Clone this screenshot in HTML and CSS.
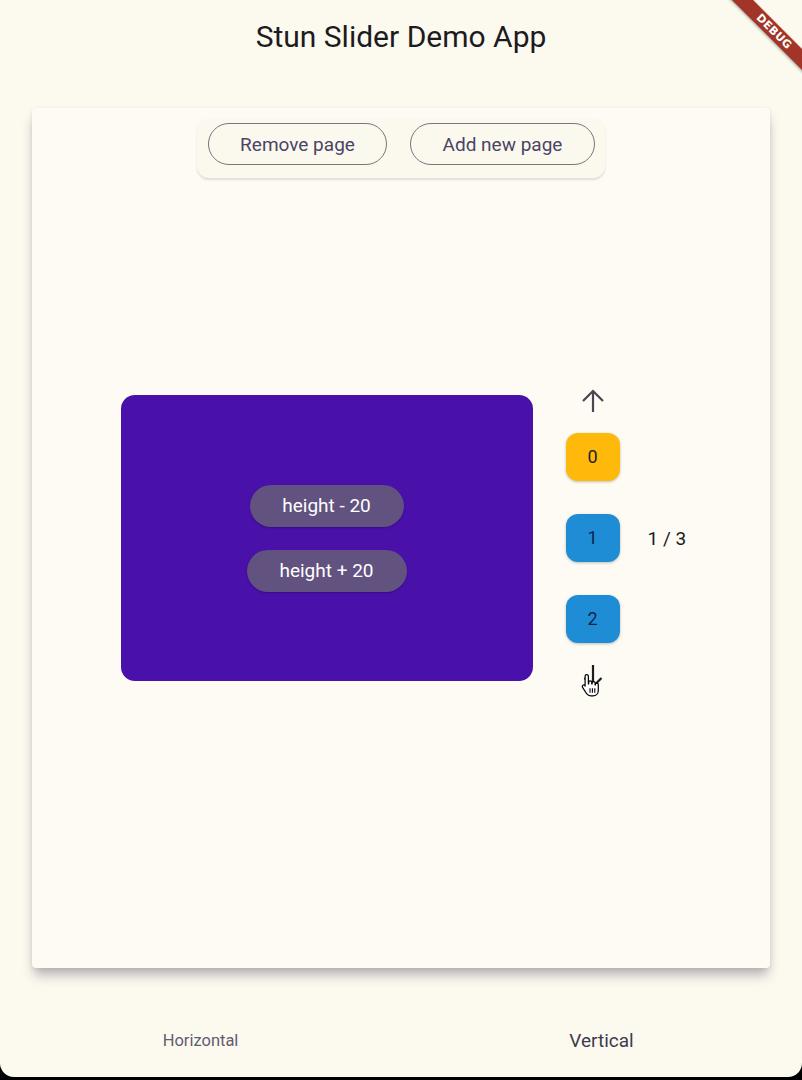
FILE: index.html
```html
<!DOCTYPE html>
<html>
<head>
<meta charset="utf-8">
<link rel="stylesheet" href="styles.css">
</head>
<body>
<div class="app">
  <header class="appbar">Stun Slider Demo App</header>
  <main class="content">
    <section class="card">
      <div class="actions">
        <button class="outlined remove">Remove page</button>
        <button class="outlined add">Add new page</button>
      </div>
      <div class="row">
        <div class="slide">
          <button class="pill minus">height - 20</button>
          <button class="pill plus">height + 20</button>
        </div>
        <div class="thumbs">
          <svg class="arrow up" viewBox="0 0 28 28" width="28" height="28"><path d="M14 25V4M4 14L14 4l10 10" fill="none" stroke="#4a4650" stroke-width="2.2"/></svg>
          <div class="thumb amber">0</div>
          <div class="thumb blue">1</div>
          <div class="thumb blue">2</div>
          <div class="downwrap">
            <svg class="arrow down" viewBox="0 0 28 28" width="28" height="28"><path d="M14 1v21M5.5 14l8.5 8.5 8.5-8.5" fill="none" stroke="#1c1b1f" stroke-width="2.2"/></svg>
            <svg class="cursor" viewBox="0 0 18 22" width="20" height="24"><path d="M6 1.5c.9 0 1.5.7 1.5 1.5v7h.3V8.6c0-.8.6-1.4 1.4-1.4s1.4.6 1.4 1.4V10h.3V9.3c0-.8.6-1.4 1.4-1.4s1.4.6 1.4 1.4V11h.3v-.4c0-.8.6-1.3 1.3-1.3s1.3.5 1.3 1.3v5.5c0 2.8-2 4.9-4.8 4.9H9.6c-1.7 0-2.8-.8-3.7-2L2.2 13.2c-.5-.7-.3-1.6.4-2 .6-.4 1.4-.2 1.8.3L4.5 12V3c0-.8.6-1.5 1.5-1.5z" fill="#fff" stroke="#000" stroke-width="1.1" stroke-linejoin="round"/><path d="M9 14v4M11.2 14v4M13.4 14v4" stroke="#000" stroke-width="1"/></svg>
          </div>
        </div>
        <div class="counter">1 / 3</div>
      </div>
    </section>
  </main>
  <nav class="bottomnav">
    <div class="tab horizontal">Horizontal</div>
    <div class="tab vertical">Vertical</div>
  </nav>
  <div class="debug"><span>DEBUG</span></div>
</div>
</body>
</html>
```
FILE: styles.css
```css
html, body {
  margin: 0;
  padding: 0;
  background: #000;
}
body {
  width: 802px;
  height: 1080px;
  overflow: hidden;
  font-family: Roboto, "Noto Sans", sans-serif;
}
.app {
  position: relative;
  width: 802px;
  height: 1077px;
  background: #fcfaef;
  border-radius: 0 0 14px 14px;
  overflow: hidden;
  display: flex;
  flex-direction: column;
}
.appbar {
  height: 72px;
  display: flex;
  align-items: center;
  justify-content: center;
  font-size: 30px;
  color: #1c1b1f;
  box-sizing: border-box;
}
.content {
  flex: 1;
  padding: 36px 32px 32px;
  display: flex;
  min-height: 0;
}
.card {
  flex: 1;
  background: #fdfbf3;
  border-radius: 4px;
  box-shadow: 0 9px 12px -2px rgba(60, 50, 80, 0.35), 0 1px 4px rgba(0, 0, 0, 0.08);
  display: grid;
  grid-template: 1fr / 1fr;
}
.actions {
  grid-area: 1 / 1;
  align-self: start;
  justify-self: center;
  margin-top: 10px;
  padding: 5px 10px 13px 11px;
  display: flex;
  gap: 23px;
  border-radius: 12px;
  background: #fbf9ee;
  box-shadow: 0 2px 2px rgba(80, 70, 90, 0.16);
}
.outlined {
  height: 42px;
  border: 1px solid #79747e;
  border-radius: 21px;
  background: transparent;
  font-family: Roboto, sans-serif;
  font-size: 19px;
  color: #4a4466;
  padding: 0;
}
.remove { width: 179px; }
.add { width: 185px; }
.row {
  grid-area: 1 / 1;
  align-self: center;
  justify-self: center;
  display: flex;
  align-items: center;
  margin-left: 6px;
}
.slide {
  width: 412px;
  height: 286px;
  background: #4a10aa;
  border-radius: 14px;
  display: flex;
  flex-direction: column;
  align-items: center;
  justify-content: center;
  gap: 23px;
}
.pill {
  height: 42px;
  border: none;
  border-radius: 21px;
  background: #62527f;
  color: #fff;
  font-family: Roboto, sans-serif;
  font-size: 19px;
  padding: 0;
  box-shadow: 0 1px 2px rgba(0, 0, 0, 0.25);
}
.minus { width: 154px; }
.plus { width: 160px; }
.thumbs {
  margin-left: 33px;
  width: 54px;
  padding-top: 2px;
  display: flex;
  flex-direction: column;
  align-items: center;
}
.arrow { display: block; }
.up { margin-bottom: 18px; }
.thumb {
  width: 54px;
  height: 48px;
  border-radius: 12px;
  display: flex;
  align-items: center;
  justify-content: center;
  font-size: 18px;
  color: #222;
  box-shadow: 0 1px 3px rgba(0, 0, 0, 0.25);
}
.thumb + .thumb { margin-top: 33px; }
.amber { background: #ffb90a; }
.blue { background: #1f8cd6; color: #10244a; }
.downwrap {
  position: relative;
  margin-top: 21px;
  width: 28px;
  height: 28px;
}
.cursor {
  position: absolute;
  left: 1px;
  top: 9px;
}
.counter {
  margin-left: 28px;
  font-size: 19px;
  color: #1c1b1f;
  width: 40px;
  white-space: nowrap;
}
.bottomnav {
  height: 77px;
  display: flex;
  flex-shrink: 0;
}
.tab {
  flex: 1;
  display: flex;
  align-items: center;
  justify-content: center;
}
.horizontal {
  font-size: 16.5px;
  color: #625b71;
  padding-top: 4px;
}
.vertical {
  font-size: 19px;
  color: #3e3a52;
  padding-top: 3px;
}
.debug {
  position: absolute;
  top: 24px;
  left: 712px;
  width: 124px;
  height: 15px;
  background: #a33428;
  transform: rotate(45deg);
  display: flex;
  align-items: center;
  justify-content: center;
  box-shadow: 0 1px 3px rgba(0, 0, 0, 0.35);
}
.debug span {
  color: #fff;
  font-family: "DejaVu Sans", sans-serif;
  font-weight: bold;
  font-size: 11px;
  letter-spacing: 0.3px;
}
```
